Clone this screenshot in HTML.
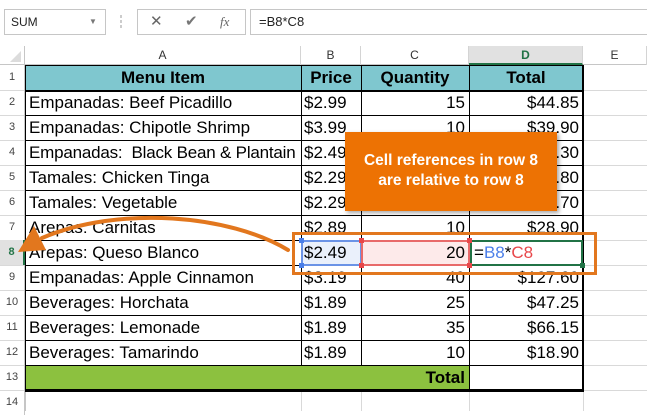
<!DOCTYPE html>
<html><head><meta charset="utf-8"><style>
*{box-sizing:border-box;margin:0;padding:0}
body{width:647px;height:411px;overflow:hidden;background:#fff;font-family:"Liberation Sans",sans-serif;position:relative}
.a{position:absolute}
.c{position:absolute;font-size:17px;line-height:25px;color:#000;white-space:nowrap;overflow:visible}
.rh{position:absolute;left:0;width:25px;text-align:center;font-size:11px;color:#444;line-height:25px;border-right:1px solid #c6c6c6}
.ch{position:absolute;top:46px;height:19px;text-align:center;font-size:12px;color:#333;line-height:19px;border-right:1px solid #d4d4d4}
.hl{position:absolute;left:0;width:647px;height:1px;background:#d9d9d9}
.vl{position:absolute;top:65px;width:1px;height:346px;background:#d9d9d9}
</style></head><body>
<div class="a" style="left:4px;top:9px;width:102px;height:26px;border:1px solid #c6c6c6;font-size:12px;line-height:24px;padding-left:6px;color:#222">SUM<span class="a" style="left:84px;top:0;font-size:8px;color:#777">▼</span></div>
<div class="a" style="left:120px;top:14px;width:2px;height:16px;background:radial-gradient(#999 40%,transparent 45%) 0 0/2px 5px"></div>
<div class="a" style="left:137px;top:9px;width:109px;height:26px;border:1px solid #c6c6c6;color:#666;font-size:15px;line-height:24px">
<span class="a" style="left:12px">✕</span><span class="a" style="left:47px;color:#777">✔</span><span class="a" style="left:82px;font-family:'Liberation Serif',serif;font-style:italic;font-size:13px">fx</span></div>
<div class="a" style="left:250px;top:9px;width:400px;height:26px;border:1px solid #c6c6c6;font-size:13px;line-height:24px;padding-left:8px;color:#222">=B8*C8</div>
<div class="a" style="left:0;top:46px;width:25px;height:19px;border-right:1px solid #c6c6c6"><div class="a" style="right:3px;bottom:3px;width:0;height:0;border-left:11px solid transparent;border-bottom:11px solid #dcdcdc"></div></div>
<div class="a" style="left:0;top:64px;width:647px;height:1px;background:#c6c6c6"></div>
<div class="ch" style="left:25px;width:276px">A</div>
<div class="ch" style="left:301px;width:60px">B</div>
<div class="ch" style="left:361px;width:108px">C</div>
<div class="ch" style="left:469px;width:114px;background:#e1e1e1;color:#217346;font-weight:bold;border-bottom:2px solid #217346">D</div>
<div class="ch" style="left:583px;width:64px">E</div>
<div class="hl" style="top:90px"></div><div class="hl" style="top:115px"></div><div class="hl" style="top:140px"></div><div class="hl" style="top:165px"></div><div class="hl" style="top:190px"></div><div class="hl" style="top:215px"></div><div class="hl" style="top:240px"></div><div class="hl" style="top:265px"></div><div class="hl" style="top:290px"></div><div class="hl" style="top:315px"></div><div class="hl" style="top:340px"></div><div class="hl" style="top:365px"></div><div class="hl" style="top:390px"></div>
<div class="vl" style="left:301px"></div><div class="vl" style="left:361px"></div><div class="vl" style="left:469px"></div><div class="vl" style="left:583px"></div><div class="vl" style="left:25px;background:#c6c6c6"></div>
<div class="rh" style="top:65px">1</div><div class="rh" style="top:90px">2</div><div class="rh" style="top:115px">3</div><div class="rh" style="top:140px">4</div><div class="rh" style="top:165px">5</div><div class="rh" style="top:190px">6</div><div class="rh" style="top:215px">7</div>
<div class="rh" style="top:240px;background:#e1e1e1;color:#217346;font-weight:bold;border-right:2px solid #217346">8</div>
<div class="rh" style="top:265px">9</div><div class="rh" style="top:290px">10</div><div class="rh" style="top:315px">11</div><div class="rh" style="top:340px">12</div><div class="rh" style="top:365px">13</div><div class="rh" style="top:390px">14</div>
<div class="a" style="left:26px;top:65px;width:557px;height:25px;background:#7fc7cf"></div>
<div class="a" style="left:26px;top:365px;width:443px;height:25px;background:#8cc13f"></div>
<div class="a" style="left:302px;top:241px;width:59px;height:24px;background:#eaf0fb"></div>
<div class="a" style="left:362px;top:241px;width:107px;height:24px;background:#fdeaea"></div>
<div class="a" style="left:25px;top:65px;width:559px;height:327px;border:1px solid #000;border-right:2px solid #000;border-bottom:3px solid #000"></div>
<div class="a" style="left:25px;top:90px;width:558px;height:2px;background:#000"></div>
<div class="a" style="left:301px;top:65px;width:1px;height:300px;background:#000"></div>
<div class="a" style="left:361px;top:65px;width:1px;height:300px;background:#000"></div>
<div class="a" style="left:469px;top:65px;width:1px;height:325px;background:#000"></div>
<div class="a" style="left:25px;top:115px;width:558px;height:1px;background:#000"></div>
<div class="a" style="left:25px;top:140px;width:558px;height:1px;background:#000"></div>
<div class="a" style="left:25px;top:165px;width:558px;height:1px;background:#000"></div>
<div class="a" style="left:25px;top:190px;width:558px;height:1px;background:#000"></div>
<div class="a" style="left:25px;top:215px;width:558px;height:1px;background:#000"></div>
<div class="a" style="left:25px;top:240px;width:558px;height:1px;background:#000"></div>
<div class="a" style="left:25px;top:265px;width:558px;height:1px;background:#000"></div>
<div class="a" style="left:25px;top:290px;width:558px;height:1px;background:#000"></div>
<div class="a" style="left:25px;top:315px;width:558px;height:1px;background:#000"></div>
<div class="a" style="left:25px;top:340px;width:558px;height:1px;background:#000"></div>
<div class="a" style="left:25px;top:365px;width:558px;height:1px;background:#000"></div>
<div class="c" style="left:25px;top:65px;width:276px;text-align:center;font-weight:bold">Menu Item</div>
<div class="c" style="left:301px;top:65px;width:60px;text-align:center;font-weight:bold">Price</div>
<div class="c" style="left:361px;top:65px;width:108px;text-align:center;font-weight:bold">Quantity</div>
<div class="c" style="left:469px;top:65px;width:114px;text-align:center;font-weight:bold">Total</div>
<div class="c" style="left:29px;top:90px">Empanadas: Beef Picadillo</div><div class="c" style="left:304px;top:90px">$2.99</div><div class="c" style="left:361px;top:90px;width:104px;text-align:right">15</div><div class="c" style="left:469px;top:90px;width:110px;text-align:right">$44.85</div>
<div class="c" style="left:29px;top:115px">Empanadas: Chipotle Shrimp</div><div class="c" style="left:304px;top:115px">$3.99</div><div class="c" style="left:361px;top:115px;width:104px;text-align:right">10</div><div class="c" style="left:469px;top:115px;width:110px;text-align:right">$39.90</div>
<div class="c" style="left:29px;top:140px;letter-spacing:-0.2px">Empanadas:&nbsp; Black Bean &amp; Plantain</div><div class="c" style="left:304px;top:140px">$2.49</div><div class="c" style="left:469px;top:140px;width:110px;text-align:right">$37.30</div>
<div class="c" style="left:29px;top:165px">Tamales: Chicken Tinga</div><div class="c" style="left:304px;top:165px">$2.29</div><div class="c" style="left:469px;top:165px;width:110px;text-align:right">$20.80</div>
<div class="c" style="left:29px;top:190px">Tamales: Vegetable</div><div class="c" style="left:304px;top:190px">$2.29</div><div class="c" style="left:469px;top:190px;width:110px;text-align:right">$34.70</div>
<div class="c" style="left:29px;top:215px">Arepas: Carnitas</div><div class="c" style="left:304px;top:215px">$2.89</div><div class="c" style="left:361px;top:215px;width:104px;text-align:right">10</div><div class="c" style="left:469px;top:215px;width:110px;text-align:right">$28.90</div>
<div class="c" style="left:29px;top:240px">Arepas: Queso Blanco</div><div class="c" style="left:304px;top:240px">$2.49</div><div class="c" style="left:361px;top:240px;width:104px;text-align:right">20</div>
<div class="c" style="left:474px;top:240px;color:#000">=<span style="color:#4a7ee8">B8</span>*<span style="color:#e8474a">C8</span></div>
<div class="c" style="left:29px;top:265px">Empanadas: Apple Cinnamon</div><div class="c" style="left:304px;top:265px">$3.19</div><div class="c" style="left:361px;top:265px;width:104px;text-align:right">40</div><div class="c" style="left:469px;top:265px;width:110px;text-align:right">$127.60</div>
<div class="c" style="left:29px;top:290px">Beverages: Horchata</div><div class="c" style="left:304px;top:290px">$1.89</div><div class="c" style="left:361px;top:290px;width:104px;text-align:right">25</div><div class="c" style="left:469px;top:290px;width:110px;text-align:right">$47.25</div>
<div class="c" style="left:29px;top:315px">Beverages: Lemonade</div><div class="c" style="left:304px;top:315px">$1.89</div><div class="c" style="left:361px;top:315px;width:104px;text-align:right">35</div><div class="c" style="left:469px;top:315px;width:110px;text-align:right">$66.15</div>
<div class="c" style="left:29px;top:340px">Beverages: Tamarindo</div><div class="c" style="left:304px;top:340px">$1.89</div><div class="c" style="left:361px;top:340px;width:104px;text-align:right">10</div><div class="c" style="left:469px;top:340px;width:110px;text-align:right">$18.90</div>
<div class="c" style="left:25px;top:365px;width:440px;text-align:right;font-weight:bold">Total</div>
<div class="a" style="left:301px;top:240px;width:61px;height:26px;border:2px solid #6b93e6"></div>
<div class="a" style="left:361px;top:240px;width:109px;height:26px;border:2px solid #e86a6a"></div>
<div class="a" style="left:470px;top:240px;width:113px;height:26px;border:2px solid #217346"></div>
<div class="a" style="left:299px;top:238px;width:5px;height:5px;background:#4a7ee8"></div><div class="a" style="left:299px;top:263px;width:5px;height:5px;background:#4a7ee8"></div>
<div class="a" style="left:359px;top:238px;width:5px;height:5px;background:#e8474a"></div><div class="a" style="left:359px;top:263px;width:5px;height:5px;background:#e8474a"></div>
<div class="a" style="left:467px;top:238px;width:5px;height:5px;background:#e8474a"></div><div class="a" style="left:467px;top:263px;width:5px;height:5px;background:#e8474a"></div>
<div class="a" style="left:580px;top:263px;width:5px;height:5px;background:#217346"></div>
<div class="a" style="left:292px;top:232px;width:305px;height:43px;border:3px solid #e2771e"></div>
<div class="a" style="left:345px;top:132px;width:212px;height:79px;background:#ed7203;box-shadow:2px 2px 4px rgba(0,0,0,.35);color:#fff;font-weight:bold;font-size:15.5px;line-height:20px;text-align:center;padding-top:19px">Cell references in row 8<br>are relative to row 8</div>
<svg class="a" style="left:0;top:0" width="647" height="411"><path d="M288,250 C230,215 120,205 42,238" fill="none" stroke="#e2771e" stroke-width="4" stroke-linecap="round"/><polygon points="18,252 34,226 46,250" fill="#e2771e"/></svg>
</body></html>
